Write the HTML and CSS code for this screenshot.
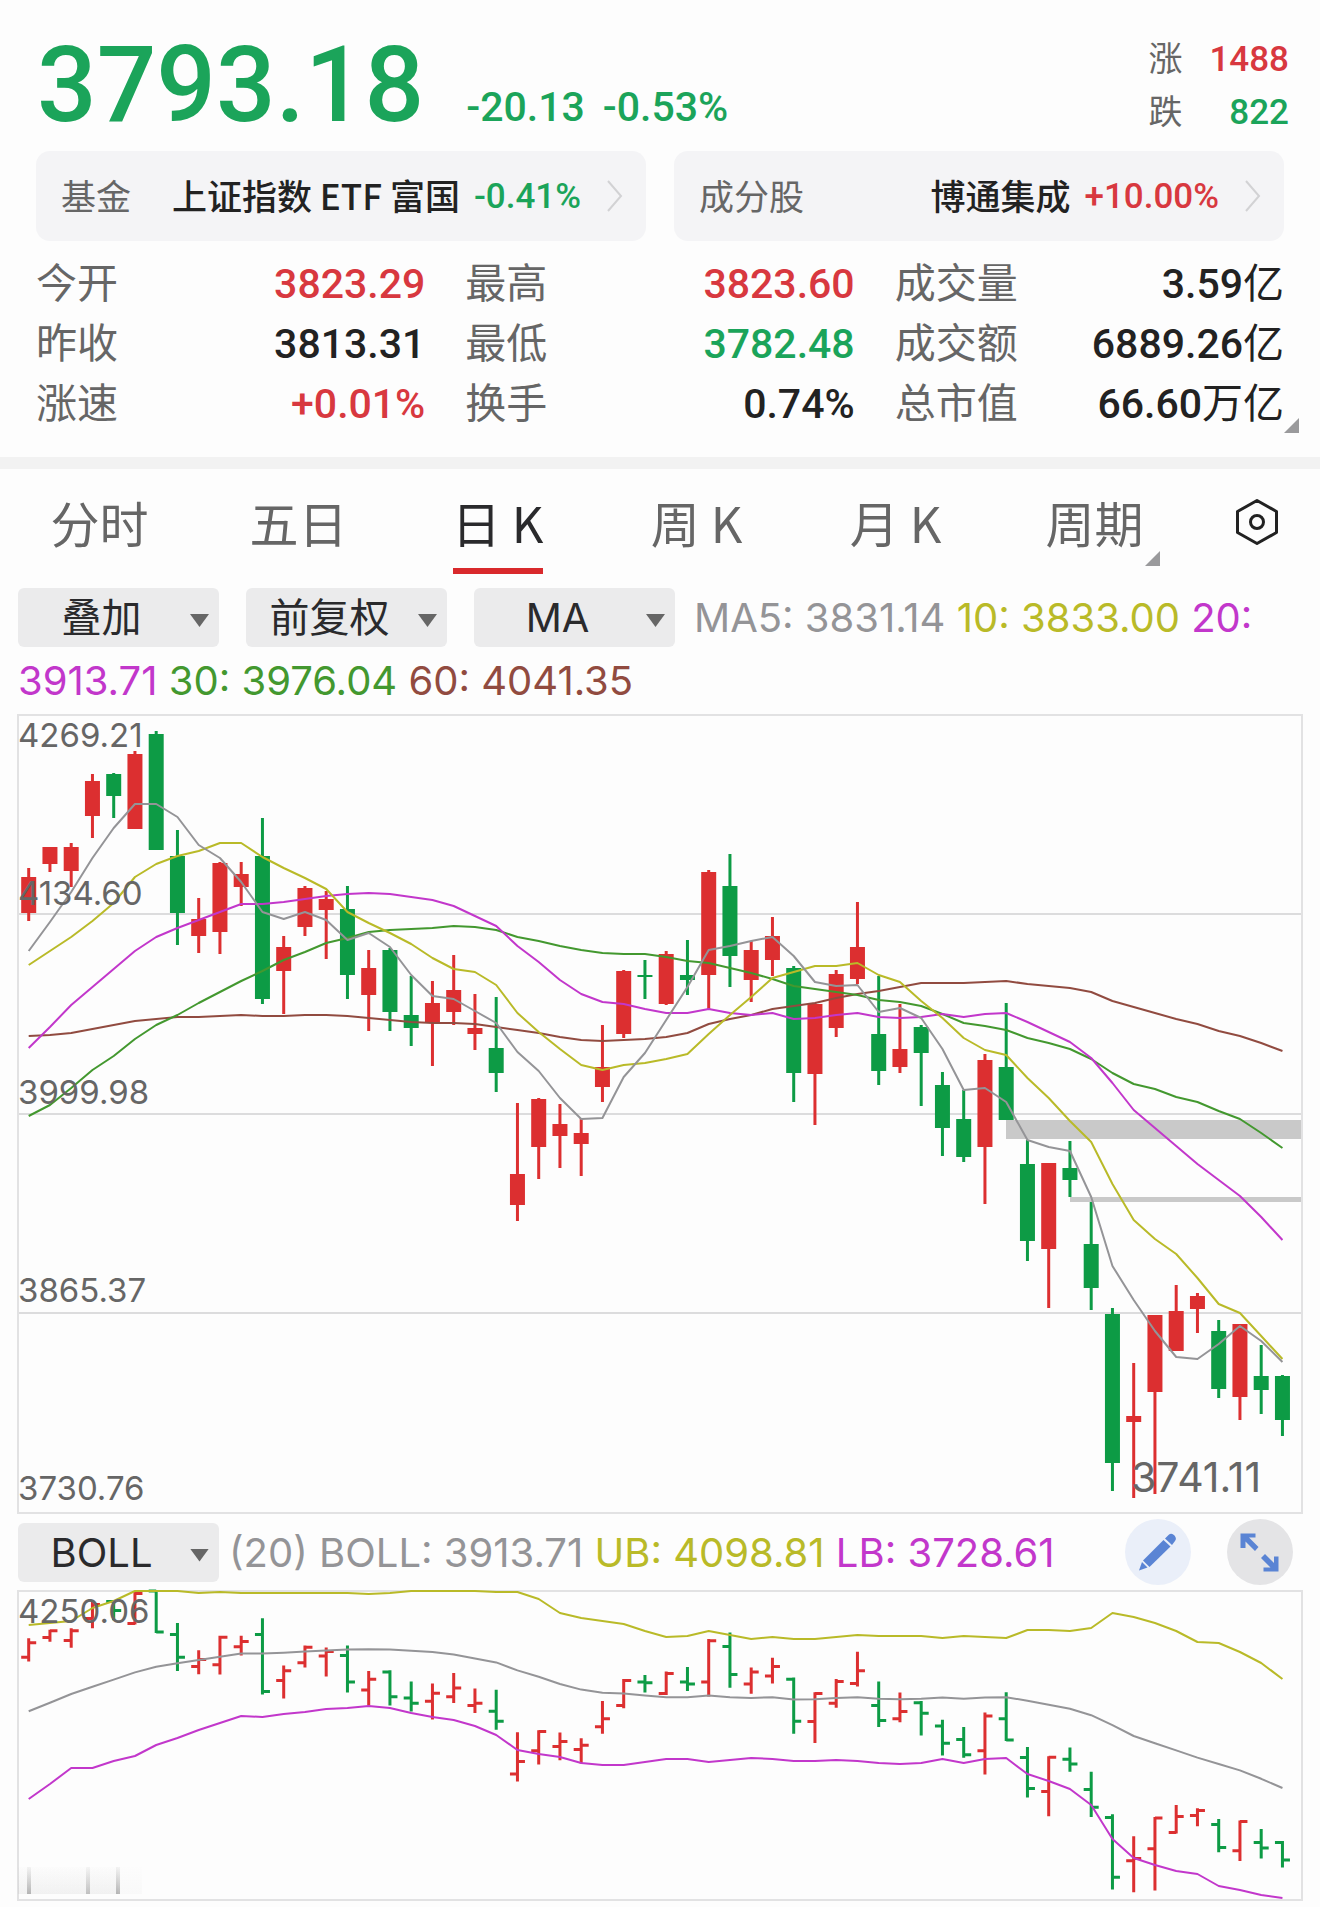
FILE: index.html
```html
<!DOCTYPE html>
<html lang="zh-CN">
<head>
<meta charset="utf-8">
<meta name="viewport" content="width=device-width, initial-scale=1">
<title>上证指数 日K</title>
<link rel="stylesheet" href="styles.css">
</head>
<body>
<header class="quote">
  <div class="quote-main down">
    <strong class="price">3793.18</strong>
    <span class="change">-20.13</span>
    <span class="change">-0.53%</span>
  </div>
  <dl class="breadth">
    <dt>涨</dt><dd class="up">1488</dd>
    <dt>跌</dt><dd class="down">822</dd>
  </dl>
</header>

<section class="cards">
  <a class="card" href="#fund">
    <span class="card-label">基金</span>
    <span class="card-name">上证指数 ETF 富国</span>
    <span class="card-rate down">-0.41%</span>
    <svg class="chevron" viewBox="0 0 16 32" aria-hidden="true"><path d="M1 1 14 16 1 31"/></svg>
  </a>
  <a class="card" href="#stocks">
    <span class="card-label">成分股</span>
    <span class="card-name">博通集成</span>
    <span class="card-rate up">+10.00%</span>
    <svg class="chevron" viewBox="0 0 16 32" aria-hidden="true"><path d="M1 1 14 16 1 31"/></svg>
  </a>
</section>

<section class="stats">
  <dl class="stat"><dt>今开</dt><dd class="up">3823.29</dd></dl>
  <dl class="stat"><dt>最高</dt><dd class="up">3823.60</dd></dl>
  <dl class="stat"><dt>成交量</dt><dd>3.59<span class="unit">亿</span></dd></dl>
  <dl class="stat"><dt>昨收</dt><dd>3813.31</dd></dl>
  <dl class="stat"><dt>最低</dt><dd class="down">3782.48</dd></dl>
  <dl class="stat"><dt>成交额</dt><dd>6889.26<span class="unit">亿</span></dd></dl>
  <dl class="stat"><dt>涨速</dt><dd class="up">+0.01%</dd></dl>
  <dl class="stat"><dt>换手</dt><dd>0.74%</dd></dl>
  <dl class="stat"><dt>总市值</dt><dd>66.60<span class="unit">万亿</span></dd></dl>
</section>

<nav class="tabs">
  <button class="tab" type="button"><span>分时</span></button>
  <button class="tab" type="button"><span>五日</span></button>
  <button class="tab active" type="button"><span>日 K</span></button>
  <button class="tab" type="button"><span>周 K</span></button>
  <button class="tab" type="button"><span>月 K</span></button>
  <button class="tab more" type="button"><span>周期</span></button>
  <button class="tab settings" type="button" aria-label="设置">
    <svg viewBox="0 0 44 48" aria-hidden="true"><path d="M22 2.500 41.500 13.500V34.500L22 45.500 2.500 34.500V13.500Z"/><circle cx="22" cy="24" r="6.500"/></svg>
  </button>
</nav>

<div class="legend">
  <span class="picker"><select aria-label="叠加"><option>叠加</option></select></span><span class="picker"><select aria-label="复权"><option>前复权</option></select></span><span class="picker"><select aria-label="主图指标"><option>MA</option></select></span><span class="ma5">MA5: 3831.14</span> <span class="ma10">10: 3833.00</span> <span class="ma20">20:</span> <span class="ma20">3913.71</span> <span class="ma30">30: 3976.04</span> <span class="ma60">60: 4041.35</span>
</div>

<svg class="chart" id="kline" viewBox="0 0 1284 798" role="img" aria-label="日K线图"></svg>

<div class="indicator">
  <span class="picker"><select aria-label="副图指标"><option>BOLL</option></select></span>
  <p class="indicator-values"><span class="ma5">(20) BOLL: 3913.71</span> <span class="ma10">UB: 4098.81</span> <span class="ma20">LB: 3728.61</span></p>
  <button class="round draw" type="button" aria-label="画线">
    <svg viewBox="0 0 66 66" aria-hidden="true"><path d="M14 51.500 17 43 22.500 48.500Z"/><path d="M18 41.500 38.500 21 45.500 27.500 24.500 48Z"/><path d="M40 19.500 43.500 16Q46.500 13.500 49.500 16.500Q52 19.500 50 22L47 26Z"/></svg>
  </button>
  <button class="round expand" type="button" aria-label="全屏">
    <svg viewBox="0 0 66 66" aria-hidden="true"><path d="M13.500 14.500H28.500V18.500H22L31.500 28 28 32 18.500 22.500V29H13.500ZM38 35 47 44V37.500H51.500V52.500H36.500V48.500H43.500L34 39Z"/></svg>
  </button>
</div>

<svg class="chart" id="boll" viewBox="0 0 1284 309" role="img" aria-label="BOLL指标图"></svg>
<script src="chart.js"></script>
</body>
</html>
```
FILE: styles.css
```css
* { box-sizing: border-box; }

body {
  margin: 0;
  padding-bottom: 7px;
  background: #fdfdfd;
  color: #222;
  font-family: "Roboto", "Noto Sans CJK SC", sans-serif;
}

button, select { font: inherit; color: inherit; border: 0; margin: 0; padding: 0; background: none; }
dl, dd, p { margin: 0; }

.up { color: #d8383f; }
.down { color: #1ba45a; }

.quote {
  display: flex;
  justify-content: space-between;
  height: 151px;
  padding: 0 31px 0 37px;
}
.quote-main { display: flex; align-items: baseline; padding-top: 22px; }
.price { font-size: 105px; font-weight: 500; line-height: 128px; margin-right: 42px; }
.change { font-size: 41px; font-weight: 500; margin-right: 18px; }
.breadth {
  display: grid;
  grid-template-columns: auto auto;
  grid-auto-rows: 53px;
  align-content: start;
  column-gap: 27px;
  padding-top: 33px;
  line-height: 53px;
}
.breadth dt { font-size: 34px; color: #666; }
.breadth dd { font-size: 35px; font-weight: 500; text-align: right; }

.cards { display: grid; grid-template-columns: 1fr 1fr; gap: 28px; padding: 0 36px; }
.card {
  display: flex;
  align-items: center;
  height: 90px;
  padding: 0 23px 0 25px;
  border-radius: 14px;
  background: #f4f4f6;
  font-size: 35px;
  text-decoration: none;
  color: #222;
  white-space: nowrap;
}
.card-label { color: #666; margin-right: auto; padding-bottom: 4px; }
.card-name { font-family: "Noto Sans CJK SC", sans-serif; font-weight: 500; padding-bottom: 4px; }
.card-rate { margin: 0 26px 0 14px; font-weight: 500; }
.card-rate.up { color: #d8383f; }
.card-rate.down { color: #1ba45a; }
.chevron { width: 16px; height: 32px; fill: none; stroke: #d2d2d4; stroke-width: 2; }

.stats {
  position: relative;
  display: grid;
  grid-template-columns: repeat(3, 1fr);
  grid-auto-rows: 60px;
  column-gap: 40px;
  padding: 13px 36px 23px;
  border-bottom: 12px solid #f2f2f2;
}
.stats::after, .more::after {
  content: "";
  position: absolute;
  width: 15px;
  height: 15px;
  background: #9a9a9c;
  clip-path: polygon(100% 0, 100% 100%, 0 100%);
}
.stats::after { right: 21px; bottom: 24px; }
.stat { display: flex; justify-content: space-between; line-height: 60px; }
.stat dt { font-size: 41px; color: #666; }
.stat dd { font-size: 41px; font-weight: 500; white-space: nowrap; }
.unit { font-weight: 400; }

.tabs { display: grid; grid-template-columns: repeat(6, 1fr) 126px; height: 105px; }
.tab {
  position: relative;
  padding-top: 1px;
  font-family: "Noto Sans CJK SC", sans-serif;
  font-size: 49px;
  line-height: 98px;
  color: #666;
}
.tab.active { color: #2a2a2c; }
.tab.active::after {
  content: "";
  position: absolute;
  left: 50%;
  bottom: 0;
  width: 90px;
  height: 6px;
  margin-left: -45px;
  background: #d9292c;
}
.more::after { right: 34px; bottom: 8px; }
.settings { display: flex; align-items: center; justify-content: center; }
.settings svg { width: 44px; height: 48px; fill: none; stroke: #222; stroke-width: 3; stroke-linejoin: round; }

.legend, .indicator { font-family: "Inter", "Noto Sans CJK SC", sans-serif; font-size: 40px; }
.legend { padding: 12px 18px 3px; line-height: 63px; }

.picker {
  display: inline-block;
  position: relative;
  width: 201px;
  height: 59px;
  vertical-align: baseline;
}
.legend .picker { margin-right: 27px; }
.legend .picker:nth-child(3) { margin-right: 19px; }
.picker select {
  appearance: none;
  display: block;
  width: 100%;
  height: 100%;
  padding-right: 34px;
  border-radius: 6px;
  background: #ebebec;
  color: #2a2a2c;
  line-height: 59px;
  text-align: center;
  text-align-last: center;
}
.picker::after {
  content: "";
  position: absolute;
  right: 10px;
  top: 26px;
  width: 19px;
  height: 13px;
  background: #666;
  clip-path: polygon(0 0, 100% 0, 50% 100%);
}

.ma5 { color: #949497; }
.ma10 { color: #b9ba28; }
.ma20 { color: #c237cb; }
.ma30 { color: #43982f; }
.ma60 { color: #914b40; }

.chart { display: block; width: calc(100% - 36px); margin: 0 18px; overflow: visible; }
.frame { fill: none; stroke: #e2e2e3; stroke-width: 2; }
.grid { stroke: #dcdcdd; stroke-width: 2; }
.gap { fill: #c9c9c9; }
.rise { fill: #dc2f30; stroke: #dc2f30; }
.fall { fill: #0d9b45; stroke: #0d9b45; }
.candle rect { stroke: none; }
.candle line { stroke-width: 3; }
.bar { fill: none; stroke-width: 3; }
.line { fill: none; stroke: currentColor; stroke-width: 2; stroke-linejoin: round; }
.axis { font-family: "Inter", sans-serif; font-size: 33px; fill: #666; }
.extreme { font-size: 41px; }

.indicator { display: flex; align-items: center; height: 78px; padding: 0 27px 0 18px; }
.indicator-values { flex: 1; padding-left: 10px; white-space: nowrap; }
.round { width: 66px; height: 66px; border-radius: 50%; }
.round svg { display: block; width: 66px; height: 66px; fill: #5a84d4; }
.draw { background: #eaeff9; margin-right: 36px; }
.expand { background: #e4e4e6; }
```
FILE: chart.js
```js
// Each candle: direction, high, body top, body bottom, low (chart units below the top edge).
const candles = `
R 153 162 198 206|R 132 132 149 157|R 128 132 156 172|R 59 66 101 123|G 58 59 81 103
R 36 39 114 114|G 16 19 135 135|G 115 141 198 230|R 183 204 221 238|R 147 148 217 239
R 147 159 172 191|G 103 141 284 289|R 221 232 256 299|R 171 173 212 221|R 176 184 195 244
G 171 194 260 284|R 235 253 280 316|G 233 235 297 316|G 261 300 313 331|R 266 288 308 351
R 240 275 297 310|R 279 313 319 335|G 282 333 358 377|R 388 459 490 506|R 383 384 432 464
R 389 409 421 453|R 403 418 429 461|R 310 352 372 387|R 255 256 319 323|G 245 260 262 284
R 236 239 289 290|G 225 260 265 280|R 155 157 260 294|G 139 171 241 272|R 226 235 265 287
R 202 221 245 261|G 251 253 358 387|R 288 289 359 410|R 255 259 313 322|R 187 232 264 269
G 261 319 356 370|R 289 334 352 358|G 310 312 338 391|G 357 370 413 441|G 375 404 442 447
R 339 345 432 489|G 288 352 405 405|G 425 449 526 546|R 448 448 534 593|G 426 453 465 482
G 487 529 573 595|G 593 599 748 776|R 648 701 707 783|R 600 600 677 779|R 570 596 636 636
R 578 581 594 618|G 605 616 674 683|R 609 609 682 705|G 630 661 675 699|G 660 661 705 721
`.trim().split(/[|\n]/).map(row => {
  const [side, ...v] = row.split(' ');
  return [side === 'R' ? 'rise' : 'fall', ...v.map(Number)];
});

const ma5 = [236,207,177,143,113,89,89,102,130,143,167,197,204,197,205,225,218,232,260,281,284,296,308,337,356,383,404,403,362,338,305,272,235,231,226,222,241,267,271,270,297,293,303,334,375,373,387,425,432,436,482,551,585,616,642,644,629,611,626,647];
const ma10 = [250,236,222,206,188,162,149,141,136,128,128,142,153,163,174,197,208,218,229,243,254,257,270,298,317,334,350,355,350,348,344,339,319,300,282,263,257,251,251,248,260,267,286,303,323,335,340,363,383,406,427,469,505,524,539,563,589,598,621,644];
const ma20 = [333,312,290,272,254,236,222,213,205,197,189,189,187,184,181,179,178,179,182,185,191,201,211,231,247,265,279,287,289,294,298,298,294,298,300,298,304,303,300,298,302,303,302,299,302,299,298,307,317,327,343,368,395,413,431,449,465,481,502,525];
const ma30 = [401,390,373,355,341,324,310,300,288,277,266,256,245,237,228,223,217,215,214,213,211,212,215,222,226,231,235,238,239,239,242,246,248,253,258,264,271,274,277,280,285,287,291,299,308,311,315,323,328,334,344,358,369,374,382,387,396,404,418,433];
const ma60 = [321,320,318,314,310,306,304,302,302,301,300,301,301,300,300,301,303,305,307,308,308,309,312,315,318,322,325,326,325,324,322,318,309,304,300,294,291,288,283,279,276,272,268,268,268,267,266,269,271,273,277,286,292,298,304,309,316,321,328,336];
const upper = [34,32,30,17,10,0,0,0,2,1,2,2,2,2,2,2,3,2,0,0,0,0,1,1,8,22,27,30,33,40,46,45,40,44,48,46,48,48,46,44,45,45,45,47,45,46,47,39,39,40,37,22,26,32,40,51,52,61,72,88];
const lower = [208,193,177,177,170,165,154,147,139,132,125,126,123,121,118,117,115,117,122,126,129,135,144,159,163,166,172,174,174,171,168,168,171,169,167,168,170,170,169,170,172,173,172,168,172,168,167,183,190,198,214,248,267,274,280,283,295,299,304,307];

const x = i => 10.7 + i * 21.25;
const line = (values, name) =>
  `<polyline class="line ${name}" points="${values.map((v, i) => `${x(i)},${v}`).join(' ')}"/>`;
const label = (left, baseline, text, extra = '') =>
  `<text class="axis ${extra}" x="${left}" y="${baseline}">${text}</text>`;

document.getElementById('kline').innerHTML =
  [199, 399, 598].map(y => `<line class="grid" x1="0" x2="1284" y1="${y}" y2="${y}"/>`).join('') +
  '<rect class="gap" x="988" y="405" width="296" height="19"/><rect class="gap" x="1052" y="482" width="232" height="5"/>' +
  '<rect class="frame" width="1284" height="798"/>' +
  candles.map(([side, high, top, bottom, low], i) =>
    `<g class="candle ${side}"><line x1="${x(i)}" x2="${x(i)}" y1="${high}" y2="${low}"/>` +
    `<rect x="${x(i) - 7.5}" y="${top}" width="15" height="${bottom - top}"/></g>`).join('') +
  line(ma60, 'ma60') + line(ma30, 'ma30') + line(ma20, 'ma20') + line(ma10, 'ma10') + line(ma5, 'ma5') +
  label(0, 32, '4269.21') + label(0, 190, '4134.60') + label(0, 389, '3999.98') +
  label(0, 587, '3865.37') + label(0, 785, '3730.76') + label(1113, 777, '3741.11', 'extreme');

// The lower panel shows the same prices on a compressed scale.
const scale = v => Math.max(0, v * 0.4 - 13);
const bars = candles.map(([side, high, top, bottom, low], i) => {
  const open = scale(side === 'rise' ? bottom : top);
  const close = scale(side === 'rise' ? top : bottom);
  return `<path class="bar ${side}" d="M${x(i)} ${scale(high) - 1}V${scale(low) + 1}M${x(i) - 7.5} ${open}H${x(i)}M${x(i)} ${close}h7.500"/>`;
}).join('');
const residue = [[0, 100, .06], [0, 124, .03], [9, 4, .5], [68, 4, .4], [98, 4, .5]]
  .map(([left, width, alpha]) => `<rect x="${left}" y="276" width="${width}" height="27" fill="url(#fade)" opacity="${alpha}"/>`).join('');

document.getElementById('boll').innerHTML =
  '<defs><linearGradient id="fade" x1="0" y1="0" x2="0" y2="1"><stop offset="0" stop-color="#888" stop-opacity=".15"/><stop offset="1" stop-color="#777"/></linearGradient></defs>' +
  '<rect class="frame" width="1284" height="309"/>' + residue + bars +
  line(upper, 'ma10') + line(ma20.map(scale), 'ma5') + line(lower, 'ma20') +
  label(0, 32, '4250.06');
```
